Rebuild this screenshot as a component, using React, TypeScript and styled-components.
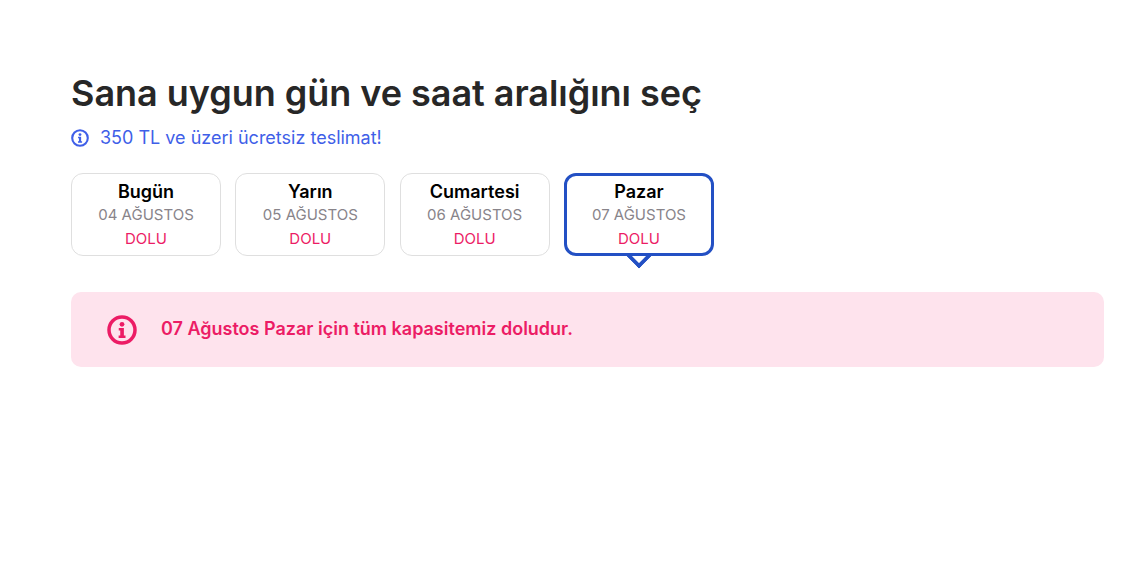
import styled, { createGlobalStyle } from "styled-components";

const GlobalStyle = createGlobalStyle`
  html, body {
    margin: 0;
    padding: 0;
    background: #fff;
    font-family: "Inter", "Liberation Sans", sans-serif;
  }
`;

const Page = styled.main`
  width: 1138px;
  height: 570px;
  box-sizing: border-box;
  padding: 71px 34px 0 71px;
  overflow: hidden;
`;

const Title = styled.h1`
  margin: 0;
  font-size: 36px;
  line-height: 44px;
  font-weight: 600;
  letter-spacing: -0.03px;
  color: #272727;
`;

const Notice = styled.div`
  display: flex;
  align-items: center;
  gap: 11px;
  margin-top: 13px;
  height: 20px;
  font-size: 18px;
  line-height: 20px;
  color: #3f5fe8;

  svg {
    margin-top: -1px;
  }
`;

const Days = styled.div`
  display: flex;
  gap: 14.33px;
  margin-top: 25px;
`;

const Day = styled.div<{ $active?: boolean }>`
  position: relative;
  box-sizing: border-box;
  width: 150px;
  height: 83px;
  padding-top: ${(p) => (p.$active ? "5px" : "7px")};
  border: ${(p) => (p.$active ? "3px solid #2350c4" : "1px solid #dfdfdf")};
  border-radius: 12px;
  display: flex;
  flex-direction: column;
  align-items: center;
  background: #fff;
`;

const Pointer = styled.span`
  position: absolute;
  left: 50%;
  bottom: -12px;
  width: 18px;
  height: 18px;
  box-sizing: border-box;
  margin-left: -9px;
  background: #fff;
  border-right: 4px solid #2350c4;
  border-bottom: 4px solid #2350c4;
  clip-path: polygon(100% 0, 100% 100%, 0 100%);
  transform: rotate(45deg);
`;

const DayName = styled.div`
  font-size: 18px;
  line-height: 21px;
  font-weight: 600;
  color: #000;
`;

const DayDate = styled.div`
  margin-top: 3px;
  font-size: 15px;
  line-height: 20px;
  color: #88848a;
`;

const DayStatus = styled.div`
  margin-top: 4px;
  font-size: 15px;
  line-height: 20px;
  color: #ec1c65;
`;

const Alert = styled.div`
  display: flex;
  align-items: center;
  gap: 24px;
  height: 75px;
  margin-top: 36px;
  padding-left: 36px;
  border-radius: 10px;
  background: #fee3ed;
  font-size: 18px;
  line-height: 20px;
  font-weight: 600;
  color: #ec1c65;
`;

const AlertText = styled.span`
  margin-top: -2px;
`;

function InfoIcon({ size, color }: { size: number; color: string }) {
  return (
    <svg width={size} height={size} viewBox="0 0 24 24" fill="none">
      <circle cx="12" cy="12" r="10.4" stroke={color} strokeWidth="2.8" />
      <circle cx="12" cy="7.4" r="1.9" fill={color} />
      <path d="M9.4 10.3h4.1v6h1.3v2.1H9.3v-2.1h1.3v-3.9H9.4z" fill={color} />
    </svg>
  );
}

const days = [
  { name: "Bugün", date: "04 AĞUSTOS" },
  { name: "Yarın", date: "05 AĞUSTOS" },
  { name: "Cumartesi", date: "06 AĞUSTOS" },
  { name: "Pazar", date: "07 AĞUSTOS", active: true },
];

export default function App() {
  return (
    <>
      <GlobalStyle />
      <Page>
        <Title>Sana uygun gün ve saat aralığını seç</Title>
        <Notice>
          <InfoIcon size={18} color="#3f5fe8" />
          350 TL ve üzeri ücretsiz teslimat!
        </Notice>
        <Days>
          {days.map((d) => (
            <Day key={d.name} $active={d.active}>
              <DayName>{d.name}</DayName>
              <DayDate>{d.date}</DayDate>
              <DayStatus>DOLU</DayStatus>
              {d.active && <Pointer />}
            </Day>
          ))}
        </Days>
        <Alert>
          <InfoIcon size={30} color="#ec1c65" />
          <AlertText>07 Ağustos Pazar için tüm kapasitemiz doludur.</AlertText>
        </Alert>
      </Page>
    </>
  );
}
